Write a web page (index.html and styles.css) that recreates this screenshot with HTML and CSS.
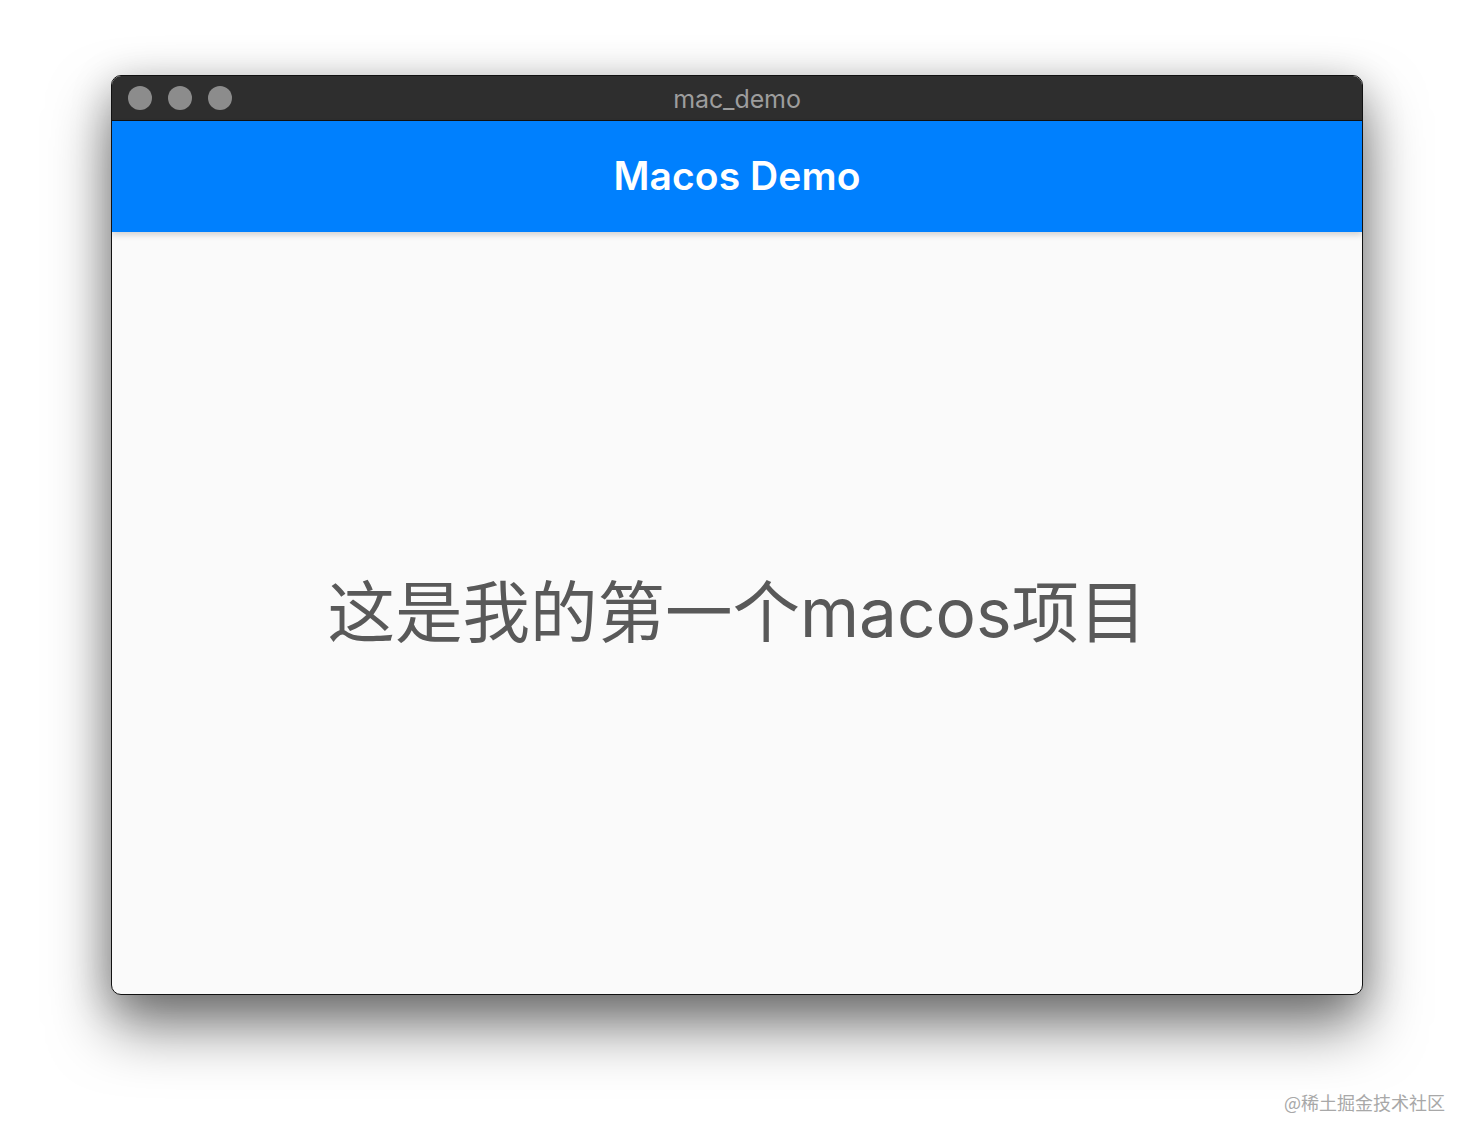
FILE: index.html
```html
<!DOCTYPE html>
<html lang="zh-CN">
<head>
<meta charset="utf-8">
<title>mac_demo</title>
<link rel="stylesheet" href="styles.css">
</head>
<body>
<div class="page">
  <div class="window">
    <div class="titlebar">
      <div class="lights">
        <span class="light"></span>
        <span class="light"></span>
        <span class="light"></span>
      </div>
      <div class="title">mac_demo</div>
    </div>
    <header class="appbar">
      <h1 class="appbar-title">Macos Demo</h1>
    </header>
    <main class="content">
      <p class="message">这是我的第一个macos项目</p>
    </main>
  </div>
  <div class="watermark">@稀土掘金技术社区</div>
</div>
</body>
</html>
```
FILE: styles.css
```css
html, body {
  margin: 0;
  padding: 0;
  background: #ffffff;
}
body {
  width: 1474px;
  height: 1142px;
  overflow: hidden;
  font-family: Inter, "Noto Sans CJK SC", sans-serif;
}
.page {
  position: relative;
  width: 1474px;
  height: 1142px;
  padding: 75px 0 0 111px;
  box-sizing: border-box;
}
.window {
  width: 1252px;
  height: 920px;
  box-sizing: border-box;
  border: 1px solid #111;
  border-radius: 10px;
  overflow: hidden;
  display: flex;
  flex-direction: column;
  background: #fafafa;
  box-shadow: 0 32px 60px rgba(0,0,0,0.5), 0 8px 40px rgba(0,0,0,0.22);
}
.titlebar {
  position: relative;
  height: 44px;
  flex: none;
  background: #2e2e2e;
  border-bottom: 1px solid #111;
  display: flex;
  align-items: center;
  justify-content: center;
}
.lights {
  position: absolute;
  left: 16px;
  top: 10px;
  display: flex;
  gap: 16px;
}
.light {
  width: 24px;
  height: 24px;
  border-radius: 50%;
  background: #8c8c8c;
}
.title {
  color: #9d9d9d;
  font-size: 25px;
  letter-spacing: -0.1px;
  padding-top: 2px;
}
.appbar {
  height: 111px;
  flex: none;
  background: #0080fe;
  display: flex;
  align-items: center;
  justify-content: center;
  box-shadow: 0 3px 6px rgba(0,0,0,0.16);
  position: relative;
  z-index: 1;
}
.appbar-title {
  margin: 0;
  color: #ffffff;
  font-size: 39px;
  font-weight: 600;
  letter-spacing: 0.1px;
  padding-bottom: 2px;
}
.content {
  flex: 1;
  display: flex;
  align-items: center;
  justify-content: center;
}
.message {
  margin: 0;
  color: #595959;
  font-size: 67.5px;
  font-family: Inter, "Noto Sans CJK SC", sans-serif;
  padding-bottom: 12px;
}
.watermark {
  position: absolute;
  right: 29px;
  top: 1089px;
  color: #a8a8a8;
  font-size: 18px;
  font-family: "Noto Sans CJK SC", sans-serif;
  text-shadow: 0 1px 0 rgba(255,255,255,0.8);
}
```
